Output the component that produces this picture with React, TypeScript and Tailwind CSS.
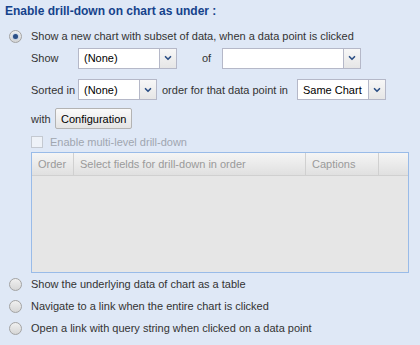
import { ChevronDown } from "lucide-react";

function Radio({ checked }: { checked?: boolean }) {
  return (
    <span className="w-[13px] h-[13px] rounded-full border border-[#a3a3a3] bg-gradient-to-b from-[#f0f0f0] to-[#d6d6d6] flex items-center justify-center shrink-0">
      {checked && <span className="w-[5px] h-[5px] rounded-full bg-[#2c4f85] shadow-[0_0_2px_#6fa0e0]" />}
    </span>
  );
}

function Select({ value, width, arrow = 17 }: { value: string; width: number; arrow?: number }) {
  return (
    <div className="flex h-[21px] border border-[#b5b8c8]" style={{ width }}>
      <div className="flex-1 bg-white flex items-center pl-[5px] text-black">{value}</div>
      <div
        className="flex items-center justify-center border-l border-[#b5b8c8] bg-gradient-to-b from-[#f7f7f7] to-[#e6e6e6]"
        style={{ width: arrow }}
      >
        <ChevronDown className="w-[10px] h-[10px] text-[#2c4f85]" strokeWidth={4} />
      </div>
    </div>
  );
}

export default function App() {
  return (
    <div
      className="w-[420px] h-[345px] bg-[#dfe8f6] text-[11px] leading-[16px] text-[#333] overflow-hidden"
      style={{ fontFamily: '"Liberation Sans", Tahoma, sans-serif' }}
    >
      <div className="pl-[5px] pt-[3px] h-[19px] text-[12px] leading-[16px] font-bold text-[#15428b]">
        Enable drill-down on chart as under :
      </div>

      <div className="flex items-center h-[16px] gap-[9px] pl-[9px] mt-[9px]">
        <Radio checked />
        <span>Show a new chart with subset of data, when a data point is clicked</span>
      </div>

      <div className="pl-[31px]">
        <div className="flex items-center mt-[3px] h-[22px]">
          <span className="w-[47px]">Show</span>
          <Select value="(None)" width={99} />
          <span className="ml-[25px] w-[20px]">of</span>
          <Select value="" width={139} />
        </div>

        <div className="flex items-center mt-[10px] h-[21px]">
          <span className="w-[47px]">Sorted in</span>
          <Select value="(None)" width={79} />
          <span className="ml-[5px] w-[135px]">order for that data point in</span>
          <Select value="Same Chart" width={89} />
        </div>

        <div className="flex items-center mt-[8px] h-[21px]">
          <span className="w-[24px]">with</span>
          <button className="h-[21px] px-[5px] border border-[#b3b3b3] rounded-[2px] bg-gradient-to-b from-[#fafafa] to-[#e4e4e4] text-black">
            Configuration
          </button>
        </div>

        <div className="flex items-center h-[14px] mt-[6px] gap-[7px] text-[#a0a6b0]">
          <span className="w-[12px] h-[12px] border border-[#c4c9d1] bg-[#eef2f8]" />
          <span>Enable multi-level drill-down</span>
        </div>

        <div className="mt-[3px] w-[378px] h-[121px] border border-[#99bbe8] bg-[#e6e6e6] flex flex-col">
          <div className="flex h-[23px] text-[#9a9a9a] bg-gradient-to-b from-[#f5f5f5] to-[#e0e0e0] border-b border-[#d0d0d0]">
            <div className="w-[42px] border-r border-[#d0d0d0] flex items-center pl-[6px]">Order</div>
            <div className="w-[232px] border-r border-[#d0d0d0] flex items-center pl-[6px]">Select fields for drill-down in order</div>
            <div className="w-[73px] border-r border-[#d0d0d0] flex items-center pl-[6px]">Captions</div>
            <div className="flex-1" />
          </div>
        </div>
      </div>

      <div className="flex flex-col gap-[6px] mt-[3px] pl-[9px]">
        <div className="flex items-center h-[16px] gap-[9px]">
          <Radio />
          <span>Show the underlying data of chart as a table</span>
        </div>
        <div className="flex items-center h-[16px] gap-[9px]">
          <Radio />
          <span>Navigate to a link when the entire chart is clicked</span>
        </div>
        <div className="flex items-center h-[16px] gap-[9px]">
          <Radio />
          <span>Open a link with query string when clicked on a data point</span>
        </div>
      </div>
    </div>
  );
}
